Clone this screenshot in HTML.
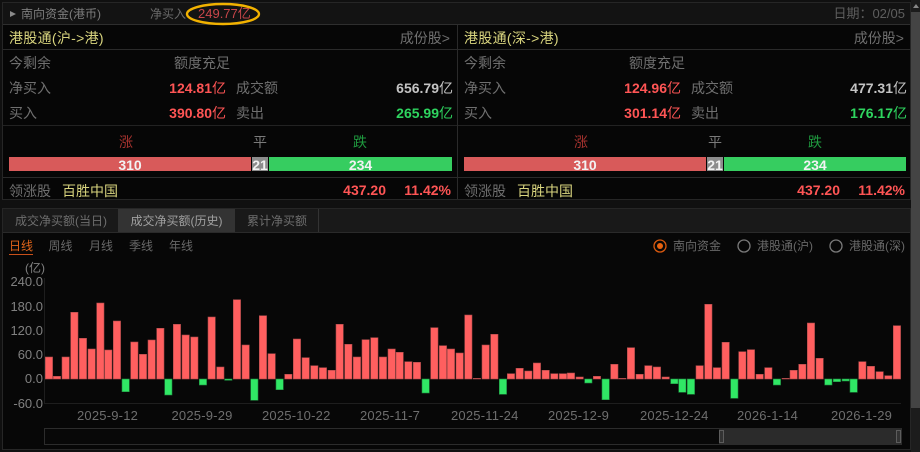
<!DOCTYPE html>
<html><head><meta charset="utf-8">
<style>
html,body{margin:0;padding:0;background:#101010;}
#p{position:relative;width:920px;height:452px;overflow:hidden;background:#101010;font-family:"Liberation Sans","Noto Sans CJK SC",sans-serif;color:#777;font-size:14px;filter:blur(.3px);}
.b{position:absolute;}
.t{position:absolute;white-space:nowrap;line-height:20px;height:20px;}
.l{color:#6f6f6f;}
.n{font-weight:bold;color:#ff5555;}
.n i,.w i,.g i{font-style:normal;font-weight:normal;}
.w{font-weight:bold;color:#c4c4c4;}
.g{font-weight:bold;color:#2ed45f;}
.y{color:#d8d47e;}
.s{font-size:13px;}
.x{font-size:12px;}
.bt{font-weight:bold;color:#f2f2f2;text-align:center;font-size:14px;}
.ax{font-size:13px;color:#808080;}
.d{font-size:13px;color:#6e6e6e;letter-spacing:.2px;}
svg{position:absolute;left:0;top:0;}
.r{fill:#ff5f5f;stroke:#a84a4a;stroke-width:.6;}
.e{fill:#30e765;stroke:#1f8a40;stroke-width:.6;}
</style></head><body><div id="p">
<!-- panels -->
<div class="b" style="left:2px;top:2px;width:909px;height:198px;background:#060606;border:1px solid #262626;box-sizing:border-box;"></div>
<div class="b" style="left:3px;top:3px;width:907px;height:21px;background:#131313;"></div>
<div class="b" style="left:3px;top:24px;width:907px;height:1px;background:#2e2e2e;"></div>
<div class="b" style="left:3px;top:49px;width:907px;height:1px;background:#2a2a2a;"></div>
<div class="b" style="left:3px;top:125px;width:907px;height:1px;background:#222;"></div>
<div class="b" style="left:3px;top:177px;width:907px;height:1px;background:#2a2a2a;"></div>
<div class="b" style="left:457px;top:25px;width:1px;height:174px;background:#2a2a2a;"></div>
<!-- scrollbar -->
<div class="b" style="left:911px;top:0;width:9px;height:452px;background:#1c1c1c;"></div>
<div class="b" style="left:911px;top:12px;width:9px;height:396px;background:#444;"></div>
<div class="b" style="left:913px;top:4px;width:0;height:0;border-left:3.5px solid transparent;border-right:3.5px solid transparent;border-bottom:4px solid #888;"></div>
<!-- header -->
<div class="b" style="left:10px;top:11px;width:0;height:0;border-top:3.5px solid transparent;border-bottom:3.5px solid transparent;border-left:6px solid #8a8a8a;"></div>
<div class="t x" style="left:21px;top:4px;color:#7d7d7d;">南向资金(港币)</div>
<div class="t x" style="left:150px;top:4px;color:#6a6a6a;">净买入</div>
<div class="t s" style="left:198px;top:4px;color:#c9464a;">249.77亿</div>
<div class="t s" style="right:15px;top:4px;color:#5e5e5e;">日期：02/05</div>
<!-- left -->
<div class="t y" style="left:9px;top:28px;letter-spacing:.3px;">港股通(沪-&gt;港)</div>
<div class="t l" style="right:470px;top:28px;">成份股&gt;</div>
<div class="t l" style="left:9px;top:53px;">今剩余</div>
<div class="t l" style="left:174px;top:53px;">额度充足</div>
<div class="t l" style="left:9px;top:78px;">净买入</div>
<div class="t n" style="right:694px;top:78px;">124.81<i>亿</i></div>
<div class="t l" style="left:236px;top:78px;">成交额</div>
<div class="t w" style="right:467px;top:78px;">656.79<i>亿</i></div>
<div class="t l" style="left:9px;top:103px;">买入</div>
<div class="t n" style="right:694px;top:103px;">390.80<i>亿</i></div>
<div class="t l" style="left:236px;top:103px;">卖出</div>
<div class="t g" style="right:467px;top:103px;">265.99<i>亿</i></div>
<div class="t" style="left:119px;top:132px;color:#a8332f;">涨</div>
<div class="t" style="left:253px;top:132px;color:#7a7a7a;">平</div>
<div class="t" style="left:353px;top:132px;color:#1f9a3f;">跌</div>
<div class="b" style="left:9px;top:157px;width:242px;height:14px;background:#d85a5a;"></div>
<div class="b" style="left:252px;top:157px;width:16px;height:14px;background:#8c8c8c;"></div>
<div class="b" style="left:269px;top:157px;width:183px;height:14px;background:#36cd60;"></div>
<div class="t bt" style="left:9px;top:155px;width:242px;">310</div>
<div class="t bt" style="left:252px;top:155px;width:16px;">21</div>
<div class="t bt" style="left:269px;top:155px;width:183px;">234</div>
<div class="t l" style="left:9px;top:181px;">领涨股</div>
<div class="t y" style="left:62px;top:181px;">百胜中国</div>
<div class="t n" style="right:534px;top:180px;">437.20</div>
<div class="t n" style="right:469px;top:180px;">11.42%</div>
<!-- right -->
<div class="t y" style="left:464px;top:28px;letter-spacing:.3px;">港股通(深-&gt;港)</div>
<div class="t l" style="right:16px;top:28px;">成份股&gt;</div>
<div class="t l" style="left:464px;top:53px;">今剩余</div>
<div class="t l" style="left:629px;top:53px;">额度充足</div>
<div class="t l" style="left:464px;top:78px;">净买入</div>
<div class="t n" style="right:239px;top:78px;">124.96<i>亿</i></div>
<div class="t l" style="left:691px;top:78px;">成交额</div>
<div class="t w" style="right:13px;top:78px;">477.31<i>亿</i></div>
<div class="t l" style="left:464px;top:103px;">买入</div>
<div class="t n" style="right:239px;top:103px;">301.14<i>亿</i></div>
<div class="t l" style="left:691px;top:103px;">卖出</div>
<div class="t g" style="right:13px;top:103px;">176.17<i>亿</i></div>
<div class="t" style="left:574px;top:132px;color:#a8332f;">涨</div>
<div class="t" style="left:708px;top:132px;color:#7a7a7a;">平</div>
<div class="t" style="left:808px;top:132px;color:#1f9a3f;">跌</div>
<div class="b" style="left:464px;top:157px;width:242px;height:14px;background:#d85a5a;"></div>
<div class="b" style="left:707px;top:157px;width:16px;height:14px;background:#8c8c8c;"></div>
<div class="b" style="left:724px;top:157px;width:182px;height:14px;background:#36cd60;"></div>
<div class="t bt" style="left:464px;top:155px;width:242px;">310</div>
<div class="t bt" style="left:707px;top:155px;width:16px;">21</div>
<div class="t bt" style="left:724px;top:155px;width:182px;">234</div>
<div class="t l" style="left:464px;top:181px;">领涨股</div>
<div class="t y" style="left:517px;top:181px;">百胜中国</div>
<div class="t n" style="right:80px;top:180px;">437.20</div>
<div class="t n" style="right:15px;top:180px;">11.42%</div>
<!-- chart panel -->
<div class="b" style="left:2px;top:208px;width:909px;height:242px;background:#070707;border:1px solid #262626;box-sizing:border-box;"></div>
<div class="b" style="left:3px;top:209px;width:907px;height:23px;background:#191919;border-bottom:1px solid #2a2a2a;"></div>
<div class="b" style="left:118px;top:209px;width:117px;height:23px;background:#333;"></div>
<div class="b" style="left:318px;top:209px;width:1px;height:23px;background:#333;"></div>
<div class="t x" style="left:15px;top:211px;color:#6e6e6e;">成交净买额(当日)</div>
<div class="t x" style="left:130.5px;top:211px;color:#a0a0a0;">成交净买额(历史)</div>
<div class="t x" style="left:247px;top:211px;color:#6e6e6e;">累计净买额</div>
<div class="t x" style="left:9px;top:236px;color:#e0641a;">日线</div>
<div class="b" style="left:9px;top:254px;width:24px;height:1px;background:#c8501a;"></div>
<div class="t x" style="left:48.5px;top:236px;color:#686868;">周线</div>
<div class="t x" style="left:89px;top:236px;color:#686868;">月线</div>
<div class="t x" style="left:129px;top:236px;color:#686868;">季线</div>
<div class="t x" style="left:169px;top:236px;color:#686868;">年线</div>
<div class="t x" style="left:673px;top:236px;color:#686868;">南向资金</div>
<div class="t x" style="left:757px;top:236px;color:#686868;">港股通(沪)</div>
<div class="t x" style="left:849px;top:236px;color:#686868;">港股通(深)</div>
<!-- axis text -->
<div class="t ax" style="left:25px;top:258px;font-size:12px;">(亿)</div>
<div class="t ax" style="right:877px;top:272px;">240.0</div>
<div class="t ax" style="right:877px;top:297px;">180.0</div>
<div class="t ax" style="right:877px;top:321px;">120.0</div>
<div class="t ax" style="right:877px;top:345px;">60.0</div>
<div class="t ax" style="right:877px;top:369px;">0.0</div>
<div class="t ax" style="right:877px;top:394px;">-60.0</div>
<div class="t d" style="left:77px;top:406px;">2025-9-12</div>
<div class="t d" style="left:171.5px;top:406px;">2025-9-29</div>
<div class="t d" style="left:262px;top:406px;">2025-10-22</div>
<div class="t d" style="left:360px;top:406px;">2025-11-7</div>
<div class="t d" style="left:451px;top:406px;">2025-11-24</div>
<div class="t d" style="left:548px;top:406px;">2025-12-9</div>
<div class="t d" style="left:640px;top:406px;">2025-12-24</div>
<div class="t d" style="left:737px;top:406px;">2026-1-14</div>
<div class="t d" style="left:831px;top:406px;">2026-1-29</div>
<!-- range slider -->
<div class="b" style="left:44px;top:428px;width:858px;height:17px;box-sizing:border-box;border:1px solid #2c2c2c;background:#080808;"></div>
<div class="b" style="left:719px;top:428px;width:183px;height:17px;background:#2b2b2b;"></div>
<div class="b" style="left:719px;top:430px;width:5px;height:13px;box-sizing:border-box;border:1px solid #5c5c5c;background:#333;"></div>
<div class="b" style="left:896px;top:430px;width:5px;height:13px;box-sizing:border-box;border:1px solid #5c5c5c;background:#333;"></div>
<svg width="920" height="452" viewBox="0 0 920 452">
<ellipse cx="223" cy="14" rx="36" ry="10" fill="none" stroke="#f2b200" stroke-width="2.4"/>
<circle cx="660" cy="246" r="6" fill="none" stroke="#d9590f" stroke-width="1.3"/><circle cx="660" cy="246" r="3" fill="#e8620f"/>
<circle cx="744" cy="246" r="6" fill="none" stroke="#7a7a7a" stroke-width="1.3"/>
<circle cx="836" cy="246" r="6" fill="none" stroke="#7a7a7a" stroke-width="1.3"/>
<path d="M44.5 278V403.5H901" fill="none" stroke="#1e1e1e"/>
<g class="bars">
<rect class="r" x="45.3" y="357" width="7.3" height="22"/>
<rect class="r" x="53.3" y="376.3" width="7.3" height="2.7"/>
<rect class="r" x="62" y="357" width="7.3" height="22"/>
<rect class="r" x="70.7" y="312.3" width="7.3" height="66.7"/>
<rect class="r" x="79.3" y="338.3" width="7.3" height="40.7"/>
<rect class="r" x="88" y="349" width="7.3" height="30"/>
<rect class="r" x="96.7" y="303" width="7.3" height="76"/>
<rect class="r" x="104.7" y="350" width="7.3" height="29"/>
<rect class="r" x="113.3" y="321" width="7.3" height="58"/>
<rect class="e" x="122" y="379" width="7.3" height="12.7"/>
<rect class="r" x="130.7" y="342" width="7.3" height="37"/>
<rect class="r" x="139.3" y="354.3" width="7.3" height="24.7"/>
<rect class="r" x="148" y="340" width="7.3" height="39"/>
<rect class="r" x="156.7" y="328.3" width="7.3" height="50.7"/>
<rect class="e" x="164.7" y="379" width="7.3" height="16"/>
<rect class="r" x="173.3" y="324.3" width="7.3" height="54.7"/>
<rect class="r" x="182" y="335" width="7.3" height="44"/>
<rect class="r" x="190.7" y="337" width="7.3" height="42"/>
<rect class="e" x="199.3" y="379" width="7.3" height="6"/>
<rect class="r" x="208" y="317" width="7.3" height="62"/>
<rect class="r" x="216.7" y="367" width="7.3" height="12"/>
<rect class="e" x="224.7" y="379" width="7.3" height="1.3"/>
<rect class="r" x="233.3" y="299.7" width="7.3" height="79.3"/>
<rect class="r" x="242" y="345" width="7.3" height="34"/>
<rect class="e" x="250.7" y="379" width="7.3" height="21.3"/>
<rect class="r" x="259.3" y="315.7" width="7.3" height="63.3"/>
<rect class="r" x="268" y="353.7" width="7.3" height="25.3"/>
<rect class="e" x="276" y="379" width="7.3" height="10.7"/>
<rect class="r" x="284.7" y="374.3" width="7.3" height="4.7"/>
<rect class="r" x="293.3" y="339" width="7.3" height="40"/>
<rect class="r" x="302" y="357.7" width="7.3" height="21.3"/>
<rect class="r" x="310.7" y="365.7" width="7.3" height="13.3"/>
<rect class="r" x="319.3" y="367.7" width="7.3" height="11.3"/>
<rect class="r" x="328" y="370.3" width="7.3" height="8.7"/>
<rect class="r" x="336" y="324.3" width="7.3" height="54.7"/>
<rect class="r" x="344.7" y="344.3" width="7.3" height="34.7"/>
<rect class="r" x="353.3" y="357" width="7.3" height="22"/>
<rect class="r" x="362" y="339.7" width="7.3" height="39.3"/>
<rect class="r" x="370.7" y="337.7" width="7.3" height="41.3"/>
<rect class="r" x="379.3" y="357" width="7.3" height="22"/>
<rect class="r" x="388" y="349" width="7.3" height="30"/>
<rect class="r" x="396" y="352.3" width="7.3" height="26.7"/>
<rect class="r" x="404.7" y="361.7" width="7.3" height="17.3"/>
<rect class="r" x="413.3" y="362.3" width="7.3" height="16.7"/>
<rect class="e" x="422" y="379" width="7.3" height="14"/>
<rect class="r" x="430.7" y="327.7" width="7.3" height="51.3"/>
<rect class="r" x="439.3" y="345.7" width="7.3" height="33.3"/>
<rect class="r" x="447.3" y="349" width="7.3" height="30"/>
<rect class="r" x="456" y="353" width="7.3" height="26"/>
<rect class="r" x="464.7" y="315" width="7.3" height="64"/>
<rect class="r" x="473.3" y="378.3" width="7.3" height=".7"/>
<rect class="r" x="482" y="345" width="7.3" height="34"/>
<rect class="r" x="490.7" y="334.3" width="7.3" height="44.7"/>
<rect class="e" x="499.3" y="379" width="7.3" height="15.3"/>
<rect class="r" x="507.3" y="373.7" width="7.3" height="5.3"/>
<rect class="r" x="516" y="368.3" width="7.3" height="10.7"/>
<rect class="r" x="524.7" y="371" width="7.3" height="8"/>
<rect class="r" x="533.3" y="363" width="7.3" height="16"/>
<rect class="r" x="542" y="370.3" width="7.3" height="8.7"/>
<rect class="r" x="550.7" y="373.7" width="7.3" height="5.3"/>
<rect class="r" x="559.3" y="373.7" width="7.3" height="5.3"/>
<rect class="r" x="567.3" y="373" width="7.3" height="6"/>
<rect class="r" x="576" y="377" width="7.3" height="2"/>
<rect class="e" x="584.7" y="379" width="7.3" height="4"/>
<rect class="r" x="593.3" y="376.3" width="7.3" height="2.7"/>
<rect class="e" x="602" y="379" width="7.3" height="20.7"/>
<rect class="r" x="610.7" y="364.3" width="7.3" height="14.7"/>
<rect class="r" x="618.7" y="378.3" width="7.3" height=".7"/>
<rect class="r" x="627.3" y="347.7" width="7.3" height="31.3"/>
<rect class="r" x="636" y="374.3" width="7.3" height="4.7"/>
<rect class="r" x="644.7" y="365.7" width="7.3" height="13.3"/>
<rect class="r" x="653.3" y="367" width="7.3" height="12"/>
<rect class="r" x="662" y="377" width="7.3" height="2"/>
<rect class="e" x="670.7" y="379" width="7.3" height="4.7"/>
<rect class="e" x="678.7" y="379" width="7.3" height="13.3"/>
<rect class="e" x="687.3" y="379" width="7.3" height="15.3"/>
<rect class="r" x="696" y="365.7" width="7.3" height="13.3"/>
<rect class="r" x="704.7" y="304.3" width="7.3" height="74.7"/>
<rect class="r" x="713.3" y="367.7" width="7.3" height="11.3"/>
<rect class="r" x="722" y="342.3" width="7.3" height="36.7"/>
<rect class="e" x="730.7" y="379" width="7.3" height="19.3"/>
<rect class="r" x="738.7" y="351.7" width="7.3" height="27.3"/>
<rect class="r" x="747.3" y="349.7" width="7.3" height="29.3"/>
<rect class="r" x="756" y="374.3" width="7.3" height="4.7"/>
<rect class="r" x="764.7" y="367.7" width="7.3" height="11.3"/>
<rect class="e" x="773.3" y="379" width="7.3" height="6"/>
<rect class="r" x="782" y="378.3" width="7.3" height=".7"/>
<rect class="r" x="790" y="370.3" width="7.3" height="8.7"/>
<rect class="r" x="798.7" y="364.3" width="7.3" height="14.7"/>
<rect class="r" x="807.3" y="323" width="7.3" height="56"/>
<rect class="r" x="816" y="358.3" width="7.3" height="20.7"/>
<rect class="e" x="824.7" y="379" width="7.3" height="6"/>
<rect class="e" x="833.3" y="379" width="7.3" height="2.7"/>
<rect class="e" x="842" y="379" width="7.3" height="2"/>
<rect class="e" x="850" y="379" width="7.3" height="13.3"/>
<rect class="r" x="858.7" y="361.7" width="7.3" height="17.3"/>
<rect class="r" x="867.3" y="366.3" width="7.3" height="12.7"/>
<rect class="r" x="876" y="371.7" width="7.3" height="7.3"/>
<rect class="r" x="884.7" y="375.7" width="7.3" height="3.3"/>
<rect class="r" x="893.3" y="325.7" width="7.3" height="53.3"/>
</g>
</svg>
</div></body></html>
